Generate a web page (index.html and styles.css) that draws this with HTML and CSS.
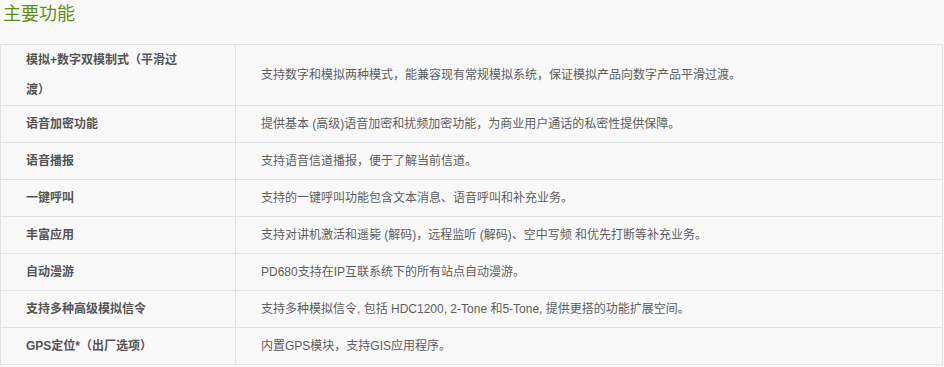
FILE: index.html
```html
<!DOCTYPE html>
<html lang="zh-CN">
<head>
<meta charset="utf-8">
<title>主要功能</title>
<link rel="stylesheet" href="styles.css">
</head>
<body>
<h2 class="title">主要功能</h2>
<table class="features">
  <colgroup><col class="c-name"><col class="c-desc"></colgroup>
  <tbody>
    <tr class="tall"><th>模拟+数字双模制式（平滑过渡）</th><td>支持数字和模拟两种模式，能兼容现有常规模拟系统，保证模拟产品向数字产品平滑过渡。</td></tr>
    <tr><th>语音加密功能</th><td>提供基本 (高级)语音加密和扰频加密功能，为商业用户通话的私密性提供保障。</td></tr>
    <tr><th>语音播报</th><td>支持语音信道播报，便于了解当前信道。</td></tr>
    <tr><th>一键呼叫</th><td>支持的一键呼叫功能包含文本消息、语音呼叫和补充业务。</td></tr>
    <tr><th>丰富应用</th><td>支持对讲机激活和遥毙 (解码)，远程监听 (解码)、空中写频 和优先打断等补充业务。</td></tr>
    <tr><th>自动漫游</th><td>PD680支持在IP互联系统下的所有站点自动漫游。</td></tr>
    <tr><th>支持多种高级模拟信令</th><td>支持多种模拟信令, 包括 HDC1200, 2-Tone 和5-Tone, 提供更搭的功能扩展空间。</td></tr>
    <tr><th>GPS定位*（出厂选项）</th><td>内置GPS模块，支持GIS应用程序。</td></tr>
  </tbody>
</table>
</body>
</html>
```
FILE: styles.css
```css
html, body {
  margin: 0;
  padding: 0;
  background: #f8f8f8;
}
body {
  font-family: "Liberation Sans", Arial, "Noto Sans CJK SC", sans-serif;
  font-size: 12px;
  color: #5e5e5e;
}
.title {
  margin: 0 0 16px;
  padding-left: 3px;
  font-size: 18px;
  line-height: 28px;
  font-weight: normal;
  color: #5f8f14;
}
.features {
  border-collapse: collapse;
  table-layout: fixed;
  width: 943px;
}
.c-name { width: 235px; }
.features th,
.features td {
  border: 1px solid #e2e2e2;
  height: 36px;
  padding: 0 25px;
  line-height: 36px;
  text-align: left;
  vertical-align: middle;
}
.features th {
  font-weight: bold;
  color: #555;
}
.features .tall th {
  height: 60px;
  line-height: 30px;
  padding-right: 40px;
}
```
